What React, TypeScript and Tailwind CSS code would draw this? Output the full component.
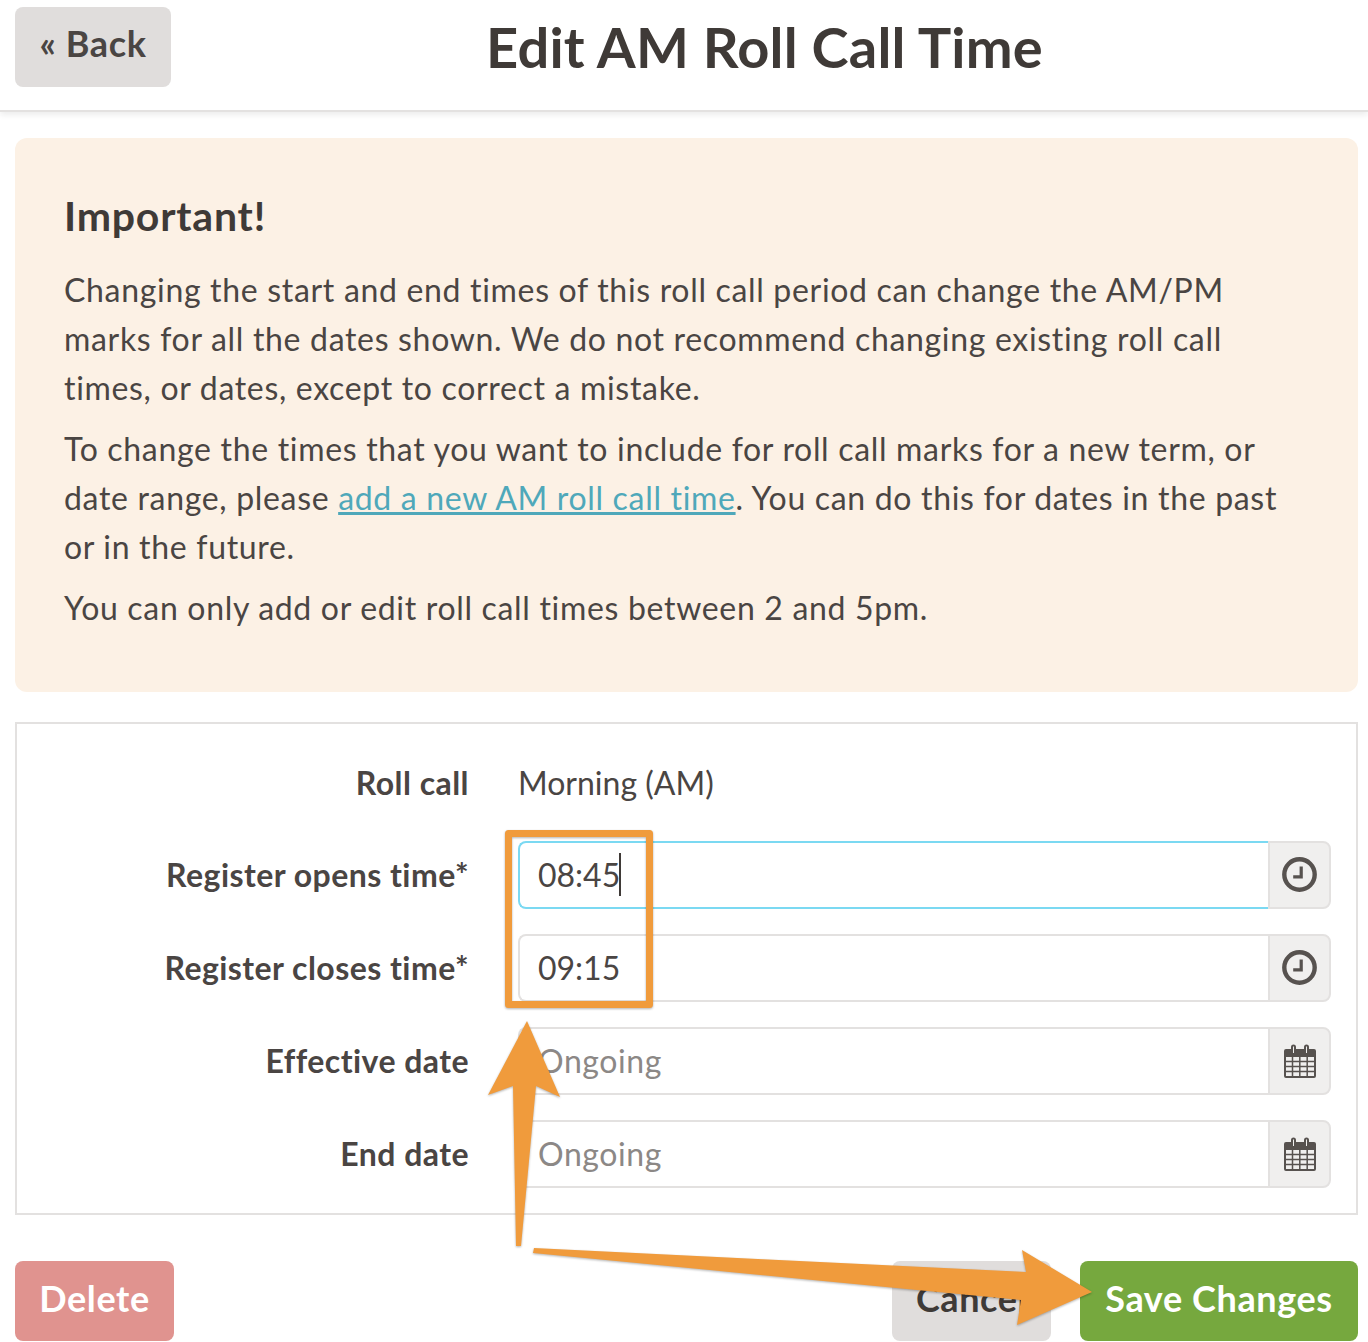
const fields = [
  { label: "Register opens time*", value: "08:45", icon: "clock", focused: true },
  { label: "Register closes time*", value: "09:15", icon: "clock" },
  { label: "Effective date", placeholder: "Ongoing", icon: "calendar" },
  { label: "End date", placeholder: "Ongoing", icon: "calendar" },
]

function ClockIcon() {
  return (
    <svg width="35" height="35" viewBox="0 0 35 35" className="text-[#57524f]">
      <circle cx="17.500" cy="17.500" r="15.200" fill="none" stroke="currentColor" strokeWidth="4.400" />
      <path fill="none" stroke="currentColor" strokeWidth="3.200" d="M19.200 9.500v10.400h-8" />
    </svg>
  )
}

function CalendarIcon() {
  return (
    <svg width="32" height="34" viewBox="0 0 32 34" className="text-[#57524f]">
      <path fill="currentColor" d="M2 5h5V3a2.500 2.500 0 0 1 5 0v2h8V3a2.500 2.500 0 0 1 5 0v2h5a2 2 0 0 1 2 2v25a2 2 0 0 1-2 2H2a2 2 0 0 1-2-2V7a2 2 0 0 1 2-2z" />
      <path fill="#f0efee" d="M9 2.500h1V9H9zM22 2.500h1V9h-1z" />
      <path fill="#f0efee" d="M2 13h28v19H2z" />
      <path fill="none" stroke="currentColor" strokeWidth="1.500" d="M2 17.500h28M2 22.500h28M2 27.500h28M8.500 13v19M15.800 13v19M23.200 13v19" />
    </svg>
  )
}

export default function App() {
  return (
    <div className="relative h-[1342px] w-full overflow-hidden bg-white font-['Lato',sans-serif] text-[#4a4543]">
      <header className="flex h-[112px] items-start border-b-2 border-[#e3e1e0] px-[15px] pt-[7px] shadow-[0_3px_6px_rgba(0,0,0,0.08)]">
        <a className="flex h-20 w-[156px] items-center justify-center rounded-lg bg-[#e0dddc] pb-2 text-[36px] font-bold tracking-[0.6px] text-[#4a4543]">« Back</a>
        <h1 className="flex-1 pl-[5px] pt-[5px] text-center text-[56px] font-bold leading-[70px] tracking-[0.2px] text-[#3f3a37]">Edit AM Roll Call Time</h1>
      </header>

      <section className="ml-[15px] mr-[10px] mt-[26px] h-[554px] rounded-xl bg-[#fcf1e5] pl-[49px] pr-[60px] pt-[50px] text-[32px] leading-[49px] tracking-[0.68px]">
        <h2 className="mb-[21px] text-[41px] font-bold leading-[56px] tracking-[0.8px] text-[#3f3a37]">Important!</h2>
        <p className="mb-3">
          Changing the start and end times of this roll call period can change the AM/PM marks for all the dates shown. We do not recommend changing existing roll call times, or dates, except to correct a mistake.
        </p>
        <p className="mb-3">
          To change the times that you want to include for roll call marks for a new term, or date range, please <a className="text-[#4fa8ba] underline">add a new AM roll call time</a>. You can do this for dates in the past or in the future.
        </p>
        <p>You can only add or edit roll call times between 2 and 5pm.</p>
      </section>

      <form className="ml-[15px] mr-[10px] mt-[30px] h-[493px] border-2 border-[#e3e1e0] pl-[31px] pr-[25px] pt-[35px]">
        <div className="flex h-12 items-center text-[32px]">
          <span className="w-[421px] text-right font-bold tracking-[0.45px]">Roll call</span>
          <span className="ml-[49px]">Morning (AM)</span>
        </div>
        <div className="mt-[34px] flex flex-col gap-[25.500px]">
          {fields.map((field) => (
            <div key={field.label} className="flex items-center text-[32px]">
              <label className="w-[421px] text-right font-bold tracking-[0.45px]">{field.label}</label>
              <div className="ml-[49px] flex h-[67.500px] flex-1">
                <div className="relative flex-1">
                  <input
                    readOnly
                    value={field.value ?? ""}
                    placeholder={field.placeholder}
                    className={`h-full w-full rounded-l-lg border-2 border-r-0 bg-white pl-[18px] outline-none placeholder:tracking-[0.6px] placeholder:text-[#8c8886] ${field.focused ? "border-[#7bd9f2]" : "border-[#e3e1e0]"}`}
                  />
                  {field.focused && <span className="absolute left-[101px] top-3 h-[43px] w-[2px] bg-[#3f3a37]" />}
                </div>
                <div className="flex w-[63px] items-center justify-center rounded-r-lg border-2 border-[#e3e1e0] bg-[#f0efee]">
                  {field.icon === "clock" ? <ClockIcon /> : <CalendarIcon />}
                </div>
              </div>
            </div>
          ))}
        </div>
      </form>

      <div className="ml-[15px] mr-[10px] mt-[46px] flex text-[36px] font-bold tracking-[0.6px]">
        <button className="h-20 w-[159px] rounded-lg bg-[#e0938f] pb-[6px] text-white">Delete</button>
        <button className="ml-auto h-20 w-[159px] rounded-lg bg-[#e0dddc] pb-[6px] text-[#3f3a37]">Cancel</button>
        <button className="ml-[29px] h-20 w-[278px] rounded-lg bg-[#76a83e] pb-[6px] text-white">Save Changes</button>
      </div>

      {/* annotation drawn over the screenshot */}
      <svg className="pointer-events-none absolute left-0 top-0 drop-shadow-[0_1px_1px_rgba(0,0,0,0.3)]" width="1368" height="1342">
        <rect x="508.500" y="833.500" width="141" height="171" fill="none" stroke="#f09b3c" strokeWidth="7" strokeLinejoin="round" />
        <path fill="#f09b3c" d="M527 1021 L488 1095 L513 1086 L516 1246 L521 1246 L536 1086 L560 1097 Z" />
        <path fill="#f09b3c" d="M534 1248 L1026 1272 L1022 1250 L1092 1292 L1017 1325 L1021 1300 L533 1253 Z" />
      </svg>
    </div>
  )
}
